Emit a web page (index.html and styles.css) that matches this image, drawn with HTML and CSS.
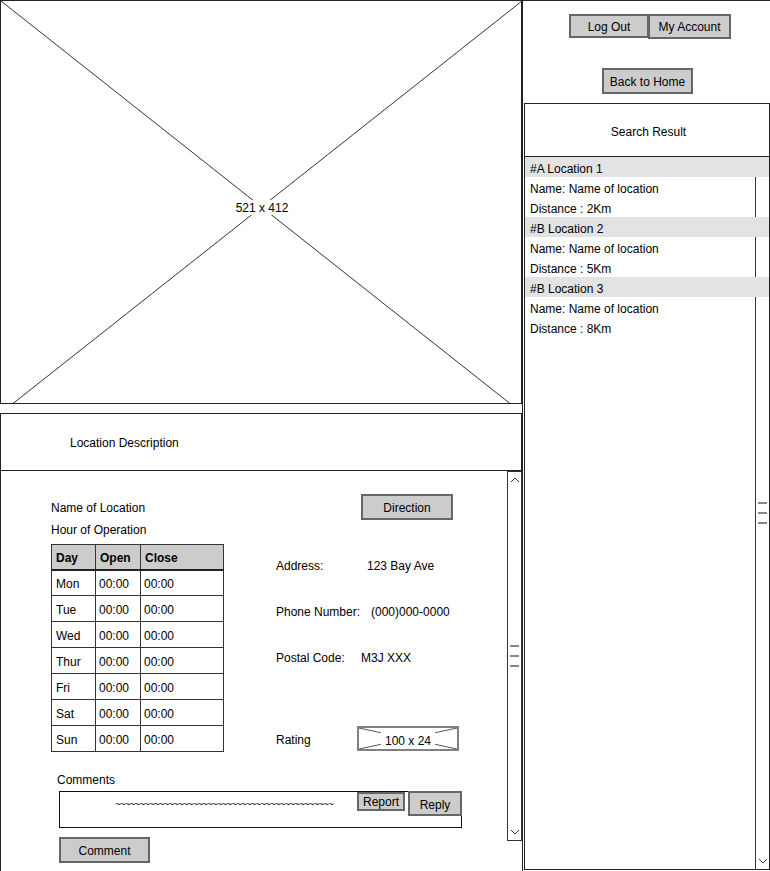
FILE: index.html
```html
<!DOCTYPE html>
<html>
<head>
<meta charset="utf-8">
<title>Location</title>
<link rel="stylesheet" href="styles.css">
</head>
<body>
<div class="page">
  <div class="left">
    <div class="hero">
      <svg class="hero-svg" width="521" height="412" viewBox="0 0 521 412">
        <line x1="0" y1="0" x2="521" y2="412"/>
        <line x1="521" y1="0" x2="0" y2="412"/>
        <rect class="hero-label-bg" x="233" y="199" width="56" height="15"/>
        <text x="261" y="211" text-anchor="middle">521 x 412</text>
      </svg>
    </div>
    <div class="desc">Location Description</div>
    <div class="panel">
      <div class="panel-main">
        <div class="info">
          <div class="hours">
            <div class="line">Name of Location</div>
            <div class="line">Hour of Operation</div>
            <table class="hours-table">
              <thead>
                <tr><th class="c-day">Day</th><th class="c-open">Open</th><th class="c-close">Close</th></tr>
              </thead>
              <tbody>
                <tr><td>Mon</td><td>00:00</td><td>00:00</td></tr>
                <tr><td>Tue</td><td>00:00</td><td>00:00</td></tr>
                <tr><td>Wed</td><td>00:00</td><td>00:00</td></tr>
                <tr><td>Thur</td><td>00:00</td><td>00:00</td></tr>
                <tr><td>Fri</td><td>00:00</td><td>00:00</td></tr>
                <tr><td>Sat</td><td>00:00</td><td>00:00</td></tr>
                <tr><td>Sun</td><td>00:00</td><td>00:00</td></tr>
              </tbody>
            </table>
          </div>
          <div class="details">
            <div class="btn btn-direction">Direction</div>
            <div class="row row-address"><span class="lbl lbl-address">Address:</span><span>123 Bay Ave</span></div>
            <div class="row row-phone"><span class="lbl lbl-phone">Phone Number:</span><span>(000)000-0000</span></div>
            <div class="row row-postal"><span class="lbl lbl-postal">Postal Code:</span><span>M3J XXX</span></div>
            <div class="row row-rating">
              <span class="lbl lbl-rating">Rating</span>
              <div class="rating-img">
                <svg class="rating-svg" width="98" height="21" viewBox="0 0 98 21">
                  <line x1="0" y1="0" x2="98" y2="21"/>
                  <line x1="98" y1="0" x2="0" y2="21"/>
                  <rect class="rating-label-bg" x="22" y="2" width="54" height="17"/>
                </svg>
                <span class="rating-text">100 x 24</span>
              </div>
            </div>
          </div>
        </div>
        <div class="comments">
          <div class="comments-label">Comments</div>
          <div class="comment-box">
            <span class="tildes">~~~~~~~~~~~~~~~~~~~~~~~~~~~~~~~~~~~~~~~~~~~~~</span>
            <div class="btn btn-report">Report</div>
            <div class="btn btn-reply">Reply</div>
          </div>
          <div class="btn btn-comment">Comment</div>
        </div>
      </div>
      <div class="vscroll vscroll-left">
        <svg class="caret" width="10" height="6" viewBox="0 0 10 6"><polyline points="1,5 5,1 9,5"/></svg>
        <div class="grips"><span></span><span></span><span></span></div>
        <svg class="caret" width="10" height="6" viewBox="0 0 10 6"><polyline points="1,1 5,5 9,1"/></svg>
      </div>
    </div>
  </div>

  <div class="right">
    <div class="account-row">
      <div class="btn btn-logout">Log Out</div>
      <div class="btn btn-account">My Account</div>
    </div>
    <div class="btn btn-home">Back to Home</div>
    <div class="search-head">Search Result</div>
    <div class="results">
      <div class="result-rows">
        <div class="r-row r-head">#A Location 1</div>
        <div class="r-row">Name: Name of location</div>
        <div class="r-row">Distance : 2Km</div>
        <div class="r-row r-head">#B Location 2</div>
        <div class="r-row">Name: Name of location</div>
        <div class="r-row">Distance : 5Km</div>
        <div class="r-row r-head">#B Location 3</div>
        <div class="r-row">Name: Name of location</div>
        <div class="r-row">Distance : 8Km</div>
      </div>
      <div class="vscroll vscroll-right">
        <svg class="caret" width="10" height="6" viewBox="0 0 10 6"><polyline points="1,5 5,1 9,5"/></svg>
        <div class="grips"><span></span><span></span><span></span></div>
        <svg class="caret" width="10" height="6" viewBox="0 0 10 6"><polyline points="1,1 5,5 9,1"/></svg>
      </div>
    </div>
  </div>
</div>
</body>
</html>
```

FILE: styles.css
```css
* { box-sizing: border-box; }
html, body { margin: 0; padding: 0; background: #fff; }
body {
  font-family: "Liberation Sans", Arial, sans-serif;
  font-size: 12px;
  color: #000;
}
.page {
  display: flex;
  width: 770px;
  height: 871px;
  overflow: hidden;
}

/* ---------- left column ---------- */
.left {
  width: 522px;
  display: flex;
  flex-direction: column;
}
.hero {
  height: 404px;
  border: 1px solid #222;
  overflow: hidden;
}
.hero-svg { display: block; }
.hero-svg line { stroke: #333; stroke-width: 1; }
.hero-label-bg { fill: #fff; }
.hero-svg text {
  font-family: "Liberation Sans", Arial, sans-serif;
  font-size: 12px;
  fill: #000;
}
.desc {
  margin-top: 9px;
  height: 58px;
  border: 1px solid #222;
  display: flex;
  align-items: center;
  padding-left: 69px;
  padding-top: 2px;
}
.panel {
  flex: 1;
  display: flex;
  border-left: 1px solid #222;
}
.panel-main {
  width: 506px;
  padding: 25px 0 0 50px;
}
.info { display: flex; }
.hours { width: 172px; }
.line { height: 22px; line-height: 22px; padding-top: 1px; }
.hours-table {
  margin-top: 4px;
  width: 172px;
  border-collapse: collapse;
  border: 1px solid #222;
  table-layout: fixed;
}
.hours-table th,
.hours-table td {
  border: 1px solid #333;
  text-align: left;
  padding: 2px 0 0 4px;
  font-size: 12px;
  white-space: nowrap;
}
.hours-table th {
  height: 25px;
  background: #cccccc;
  font-weight: bold;
  border-bottom: 2px solid #222;
}
.hours-table td { height: 26px; }
.hours-table td + td { padding-left: 3px; }
.c-day { width: 44px; }
.c-open { width: 45px; }
.c-close { width: 83px; }

.details {
  margin-left: 53px;
  margin-top: -2px;
}
.btn {
  background: #cccccc;
  border: 2px solid #666;
  display: flex;
  align-items: center;
  justify-content: center;
  font-size: 12px;
  white-space: nowrap;
  padding-top: 1px;
}
.btn-direction {
  margin-left: 85px;
  width: 92px;
  height: 26px;
  padding-top: 2px;
}
.row {
  display: flex;
  align-items: center;
  height: 20px;
  margin-top: 26px;
  padding-top: 1px;
}
.row-address { margin-top: 35px; }
.row-rating { margin-top: 59px; height: 25px; padding-top: 0; }
.lbl-address { width: 91px; }
.lbl-phone { width: 95px; }
.lbl-postal { width: 85px; }
.lbl-rating { width: 81px; padding-top: 3px; }
.rating-img {
  position: relative;
  width: 102px;
  height: 25px;
  border: 2px solid #808080;
  display: flex;
  align-items: center;
  justify-content: center;
}
.rating-svg { position: absolute; left: 0; top: 0; }
.rating-svg line { stroke: #555; stroke-width: 1; }
.rating-label-bg { fill: #fff; }
.rating-text { position: relative; padding-top: 4px; }

.comments { margin-left: 6px; }
.comments-label {
  margin-top: 17px;
  height: 20px;
  line-height: 20px;
  padding-top: 1px;
}
.comment-box {
  position: relative;
  margin-top: 2px;
  margin-left: 2px;
  width: 403px;
  height: 37px;
  border: 1px solid #111;
}
.tildes {
  position: absolute;
  left: 55px;
  top: 7px;
  white-space: nowrap;
  font-size: 10px;
  letter-spacing: -1px;
  color: #222;
}
.btn-report {
  position: absolute;
  left: 297px;
  top: 0;
  width: 48px;
  height: 19px;
  padding-top: 0;
}
.btn-reply {
  position: absolute;
  right: -1px;
  top: -1px;
  width: 54px;
  height: 25px;
  padding-top: 2px;
}
.btn-comment {
  margin-top: 9px;
  margin-left: 2px;
  width: 91px;
  height: 26px;
  padding-top: 2px;
}

.vscroll {
  width: 15px;
  border: 1px solid #333;
  display: flex;
  flex-direction: column;
  align-items: center;
  justify-content: space-between;
  padding: 5px 0 5px;
}
.vscroll-left {
  height: 370px;
  align-self: flex-start;
}
.caret { display: block; }
.caret polyline { fill: none; stroke: #333; stroke-width: 1; }
.grips { display: flex; flex-direction: column; gap: 8px; }
.grips span {
  display: block;
  width: 9px;
  height: 2px;
  background: #888;
}

/* ---------- right column ---------- */
.right {
  width: 248px;
  border-left: 1px solid #222;
  border-top: 1px solid #222;
  display: flex;
  flex-direction: column;
}
.account-row {
  display: flex;
  margin-top: 13px;
  padding-left: 46px;
}
.btn-logout { width: 80px; height: 24px; }
.btn-account { width: 83px; height: 25px; margin-left: -1px; }
.btn-home {
  margin-top: 29px;
  margin-left: 79px;
  width: 91px;
  height: 26px;
  padding-top: 2px;
}
.search-head {
  margin-top: 9px;
  margin-left: 1px;
  width: 246px;
  height: 54px;
  border: 1px solid #222;
  display: flex;
  align-items: center;
  justify-content: center;
  padding-left: 3px;
  padding-top: 4px;
}
.results {
  position: relative;
  margin-left: 1px;
  width: 246px;
  height: 713px;
  border: 1px solid #222;
  border-top: none;
}
.result-rows {
  position: relative;
  z-index: 1;
}
.r-row {
  height: 20px;
  line-height: 20px;
  padding-left: 5px;
  padding-top: 2px;
}
.r-head { background: #e3e3e3; }
.vscroll-right {
  position: absolute;
  right: 0;
  top: 0;
  bottom: 0;
  width: 14px;
  border: none;
  border-left: 1px solid #333;
}
```
